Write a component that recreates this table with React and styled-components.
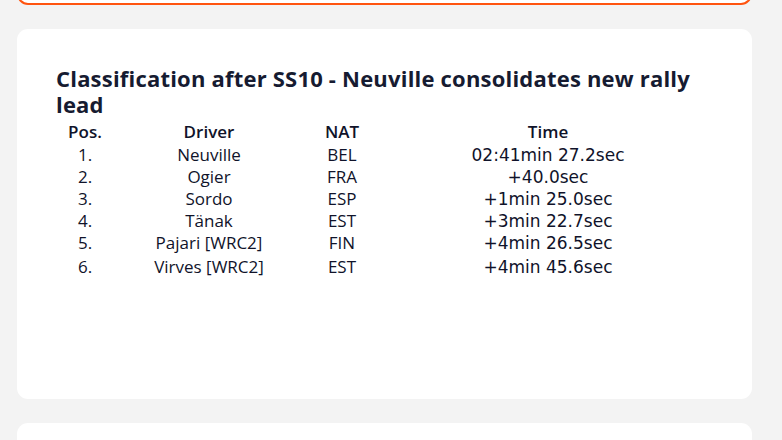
import React from "react";
import styled, { createGlobalStyle } from "styled-components";

const Global = createGlobalStyle`
  html, body { margin: 0; padding: 0; background: #f3f3f3; }
  body { font-family: "Open Sans", "Liberation Sans", sans-serif; overflow: hidden; }
`;

const Page = styled.div`
  display: flex;
  flex-direction: column;
  gap: 24px;
  padding: 0 30px 0 17px;
`;

const Clip = styled.div`
  height: 5px;
  overflow: hidden;
  display: flex;
  flex-direction: column;
  justify-content: flex-end;
`;

const Card = styled.section`
  flex-shrink: 0;
  background: #fff;
  border-radius: 11px;
  box-sizing: border-box;
  height: ${(p) => p.$h}px;
  padding: 36px 39px;
`;

const AccentCard = styled(Card)`
  border: 2px solid #ff5410;
`;

const Title = styled.h2`
  margin: 0;
  font-size: 22px;
  line-height: 26px;
  letter-spacing: 0.2px;
  font-weight: 700;
  color: #161b31;
`;

const Table = styled.table`
  border-collapse: collapse;
  table-layout: fixed;
  margin-top: 4px;
  width: 660px;
  color: #10132a;
  font-size: 17px;
  line-height: 22px;
`;

const HeadCell = styled.th`
  width: ${(p) => p.$w}px;
  padding: 0 0 1px;
  text-align: center;
  font-weight: 600;
`;

const Cell = styled.td`
  padding: ${(p) => (p.$last ? "2px 0 0" : "0")};
  text-align: center;
  font-weight: 500;
`;

const TimeCell = styled(Cell)`
  font-family: "DejaVu Sans", "Open Sans", sans-serif;
  font-weight: 400;
  font-size: 17px;
`;

const columns = [
  ["Pos.", 58],
  ["Driver", 190],
  ["NAT", 76],
  ["Time", 336],
];

const rows = [
  ["1.", "Neuville", "BEL", "02:41min 27.2sec"],
  ["2.", "Ogier", "FRA", "+40.0sec"],
  ["3.", "Sordo", "ESP", "+1min 25.0sec"],
  ["4.", "Tänak", "EST", "+3min 22.7sec"],
  ["5.", "Pajari [WRC2]", "FIN", "+4min 26.5sec"],
  ["6.", "Virves [WRC2]", "EST", "+4min 45.6sec"],
];

export default function App() {
  return (
    <>
      <Global />
      <Page>
        <Clip>
          <AccentCard $h={45} />
        </Clip>
        <Card $h={370}>
          <Title>Classification after SS10 - Neuville consolidates new rally lead</Title>
          <Table>
            <thead>
              <tr>
                {columns.map(([label, w]) => (
                  <HeadCell key={label} $w={w}>{label}</HeadCell>
                ))}
              </tr>
            </thead>
            <tbody>
              {rows.map(([pos, driver, nat, time], ri) => {
                const last = ri === rows.length - 1;
                return (
                  <tr key={pos}>
                    <Cell $last={last}>{pos}</Cell>
                    <Cell $last={last}>{driver}</Cell>
                    <Cell $last={last}>{nat}</Cell>
                    <TimeCell $last={last}>{time}</TimeCell>
                  </tr>
                );
              })}
            </tbody>
          </Table>
        </Card>
        <Card $h={60} />
      </Page>
    </>
  );
}
